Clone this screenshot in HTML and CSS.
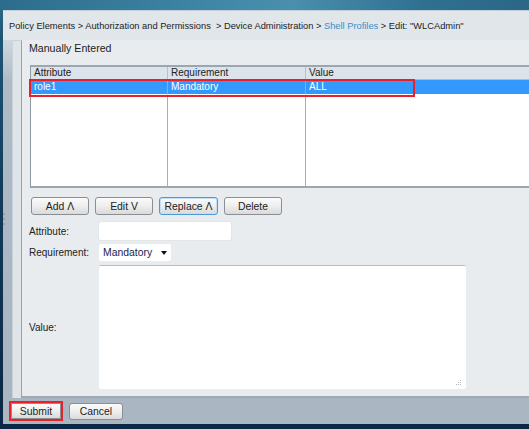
FILE: index.html
```html
<!DOCTYPE html>
<html>
<head>
<meta charset="utf-8">
<link rel="stylesheet" href="styles.css">
</head>
<body>
<div class="top"></div>
<div class="shell">
  <div class="crumb">
    <span>Policy Elements &gt; Authorization and Permissions &nbsp;&gt; Device Administration &gt; <span class="link">Shell Profiles</span> &gt; Edit: "WLCAdmin"</span>
  </div>
  <div class="main">
    <div class="side"><i></i><i></i><i></i></div>
    <div class="rail"></div>
    <div class="content">
      <div class="title">Manually Entered</div>
      <div class="tablewrap">
        <div class="table">
          <div class="th">Attribute</div>
          <div class="th">Requirement</div>
          <div class="th last">Value</div>
          <div class="td sel">role1</div>
          <div class="td sel">Mandatory</div>
          <div class="td sel last">ALL</div>
          <div class="fill"></div>
          <div class="fill"></div>
          <div class="fill last"></div>
        </div>
        <div class="mark"></div>
      </div>
      <div class="btns">
        <button class="btn">Add &Lambda;</button>
        <button class="btn">Edit V</button>
        <button class="btn focus">Replace &Lambda;</button>
        <button class="btn">Delete</button>
      </div>
      <div class="row r1">
        <span class="lbl">Attribute:</span>
        <div class="input"></div>
      </div>
      <div class="row r2">
        <span class="lbl">Requirement:</span>
        <div class="select"><span>Mandatory</span><b class="caret"></b></div>
      </div>
      <div class="row r3">
        <span class="lbl">Value:</span>
        <div class="area">
          <svg class="grip" width="6" height="6" viewBox="0 0 6 6"><rect x="4" y="0" width="1" height="1" fill="#b5b5b5"/><rect x="2" y="2" width="1" height="1" fill="#b5b5b5"/><rect x="4" y="2" width="1" height="1" fill="#b5b5b5"/><rect x="0" y="4" width="1" height="1" fill="#b5b5b5"/><rect x="2" y="4" width="1" height="1" fill="#b5b5b5"/><rect x="4" y="4" width="1" height="1" fill="#b5b5b5"/></svg>
        </div>
      </div>
    </div>
  </div>
  <div class="footer">
    <div class="redbox"><button class="btn sbtn">Submit</button></div>
    <button class="btn cbtn">Cancel</button>
  </div>
</div>
</body>
</html>
```

FILE: styles.css
```css
html, body {
  margin: 0;
  padding: 0;
}
body {
  width: 529px;
  height: 429px;
  overflow: hidden;
  font-family: "Liberation Sans", Arial, sans-serif;
  color: #222;
  background: linear-gradient(180deg, #2b6a8a 0, #1f5574 40px, #123a5a 200px, #0b2743 100%);
}
.top {
  height: 10px;
  background: linear-gradient(100deg, #2c6c8c 0%, #3d83a3 35%, #4a8fae 55%, #2f7091 80%, #2a6787 100%);
}
.shell {
  margin-left: 3px;
  height: 414px;
  display: flex;
  flex-direction: column;
}
.crumb {
  height: 29px;
  flex: none;
  border-top: 1px solid #c4cfd7;
  background: #e1e6ea;
  display: flex;
  align-items: center;
  padding-left: 6px;
  font-size: 9.3px;
  white-space: nowrap;
  color: #222;
}
.crumb .link { color: #3a90c6; }
.main {
  flex: 1;
  display: flex;
  min-height: 0;
}
.side {
  width: 9px;
  flex: none;
  background: linear-gradient(180deg, #cfd8de 0, #aebbc6 40px, #a8b5c1 100%);
  display: flex;
  flex-direction: column;
  justify-content: center;
  gap: 3px;
}
.side i {
  display: block;
  width: 2px;
  height: 2px;
  background: #8ea0b1;
}
.rail {
  width: 8px;
  flex: none;
  border-left: 1px solid #c9d2d9;
  border-right: 1px solid #97a3ac;
  border-top: 1px solid #c9d2d9;
  background: #dfe4e8;
}
.content {
  flex: 1;
  min-width: 0;
  overflow: hidden;
  background: #e9ecee;
  border-bottom: 2px solid #9eaab3;
  padding: 1px 0 0 7px;
  display: flex;
  flex-direction: column;
}
.title {
  height: 14px;
  line-height: 14px;
  font-size: 10.6px;
}
.tablewrap {
  margin-top: 10px;
  margin-left: 1px;
  width: 540px;
  position: relative;
}
.table {
  display: grid;
  grid-template-columns: 137px 138px 1fr;
  grid-template-rows: 13px 15px 1fr;
  height: 119px;
  border-top: 2px solid #9ba7b0;
  border-left: 1px solid #8e9aa3;
  border-bottom: 2px solid #9ba7b0;
  background: #fff;
  font-size: 10px;
}
.th {
  background: #dce3ea;
  border-bottom: 1px solid #b3bcc3;
  border-right: 1px solid #b9c1c8;
  padding-left: 3px;
  line-height: 12px;
  color: #222;
}
.td {
  padding-left: 3px;
  line-height: 14px;
  border-bottom: 1px solid #fff;
}
.td.sel {
  background: #3399ff;
  color: #fff;
  border-right: 1px solid #6fb5fb;
}
.fill {
  border-right: 1px solid #a6aeb5;
}
.last { border-right: none; }
.mark {
  position: absolute;
  left: -1px;
  top: 14px;
  width: 382px;
  height: 14px;
  border: 2px solid #e8202a;
}
.btn {
  font-family: "Liberation Sans", Arial, sans-serif;
  font-size: 10.4px;
  color: #222;
  border: 1px solid #8a8f94;
  border-radius: 3px;
  background: linear-gradient(180deg, #fbfbfb 0%, #eeeeee 50%, #dadada 100%);
  padding: 0;
  margin: 0;
  height: 18px;
  cursor: default;
}
.btns {
  margin-top: 9px;
  margin-left: 2px;
  display: flex;
  gap: 6px;
}
.btns .btn { width: 58px; }
.btns .btn.focus {
  width: 59px;
  border-color: #4a9ad6;
  box-shadow: inset 0 0 0 1px #bfe0f7;
}
.row {
  display: flex;
  align-items: center;
  font-size: 10px;
}
.lbl { width: 70px; flex: none; }
.r1 { margin-top: 7px; }
.input {
  width: 132px;
  height: 18px;
  background: #fff;
  border-radius: 2px;
  box-shadow: 0 0 0 1px #e2e6e9;
}
.r2 { margin-top: 4px; }
.select {
  width: 72px;
  height: 17px;
  background: #fff;
  border-radius: 2px;
  display: flex;
  align-items: center;
  padding-left: 4px;
  box-sizing: border-box;
  color: #1c1c48;
  font-size: 10.4px;
}
.caret {
  width: 0;
  height: 0;
  border-left: 3.5px solid transparent;
  border-right: 3.5px solid transparent;
  border-top: 4px solid #111;
  margin-left: 9px;
  margin-top: 1px;
}
.r3 { margin-top: 4px; }
.area {
  width: 367px;
  height: 123px;
  background: #fff;
  border-top: 1px solid #b8bcc0;
  border-radius: 2px;
  position: relative;
}
.grip {
  position: absolute;
  right: 4px;
  bottom: 3px;
}
.footer {
  height: 26px;
  flex: none;
  background: #aab6c1;
  display: flex;
  align-items: center;
  padding-left: 6px;
  gap: 6px;
}
.redbox {
  border: 2px solid #e8202a;
  display: flex;
}
.sbtn {
  width: 50px;
  height: 16px;
  border-radius: 1px;
}
.cbtn {
  width: 54px;
  height: 17px;
}
```
